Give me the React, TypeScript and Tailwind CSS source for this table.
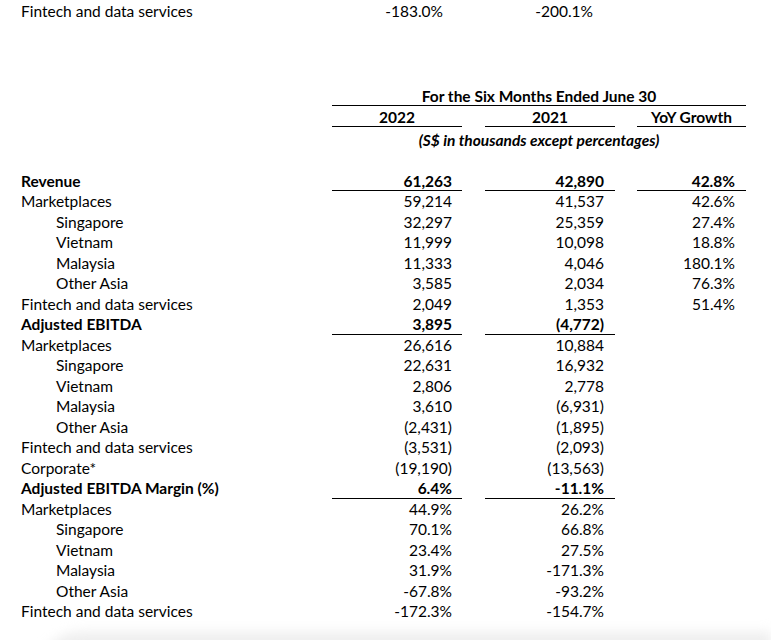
import React from "react";

type Row = {
  label: string;
  indent?: boolean;
  bold?: boolean;
  a: string;
  b: string;
  c?: string;
};

const rows: Row[] = [
  { label: "Revenue", bold: true, a: "61,263", b: "42,890", c: "42.8%" },
  { label: "Marketplaces", a: "59,214", b: "41,537", c: "42.6%" },
  { label: "Singapore", indent: true, a: "32,297", b: "25,359", c: "27.4%" },
  { label: "Vietnam", indent: true, a: "11,999", b: "10,098", c: "18.8%" },
  { label: "Malaysia", indent: true, a: "11,333", b: "4,046", c: "180.1%" },
  { label: "Other Asia", indent: true, a: "3,585", b: "2,034", c: "76.3%" },
  { label: "Fintech and data services", a: "2,049", b: "1,353", c: "51.4%" },
  { label: "Adjusted EBITDA", bold: true, a: "3,895", b: "(4,772)" },
  { label: "Marketplaces", a: "26,616", b: "10,884" },
  { label: "Singapore", indent: true, a: "22,631", b: "16,932" },
  { label: "Vietnam", indent: true, a: "2,806", b: "2,778" },
  { label: "Malaysia", indent: true, a: "3,610", b: "(6,931)" },
  { label: "Other Asia", indent: true, a: "(2,431)", b: "(1,895)" },
  { label: "Fintech and data services", a: "(3,531)", b: "(2,093)" },
  { label: "Corporate*", a: "(19,190)", b: "(13,563)" },
  { label: "Adjusted EBITDA Margin (%)", bold: true, a: "6.4%", b: "-11.1%" },
  { label: "Marketplaces", a: "44.9%", b: "26.2%" },
  { label: "Singapore", indent: true, a: "70.1%", b: "66.8%" },
  { label: "Vietnam", indent: true, a: "23.4%", b: "27.5%" },
  { label: "Malaysia", indent: true, a: "31.9%", b: "-171.3%" },
  { label: "Other Asia", indent: true, a: "-67.8%", b: "-93.2%" },
  { label: "Fintech and data services", a: "-172.3%", b: "-154.7%" },
];

function DataRow({ r }: { r: Row }) {
  const cell = r.bold ? "border-b border-black font-bold" : "";
  return (
    <div className="flex h-[20.5px] leading-[20.5px]">
      <div className={`w-[332px] ${r.indent ? "pl-[56px]" : "pl-[21px]"} ${r.bold ? "font-bold" : ""}`}>
        {r.label}
      </div>
      <div className={`w-[130px] pr-[10px] text-right ${cell}`}>{r.a}</div>
      <div className="w-[23px]" />
      <div className={`w-[130px] pr-[11px] text-right ${cell}`}>{r.b}</div>
      <div className="w-[22px]" />
      <div className={`w-[109px] pr-[11px] text-right ${r.bold && r.c ? cell : ""}`}>{r.c ?? ""}</div>
    </div>
  );
}

export default function App() {
  return (
    <div className="relative h-[640px] w-[771px] overflow-hidden bg-white text-[15.5px] text-black font-['Lato',sans-serif]">
      <div className="mt-[1px] flex h-[20.5px] leading-[20.5px]">
        <div className="w-[332px] pl-[21px]">Fintech and data services</div>
        <div className="w-[111px] text-right">-183.0%</div>
        <div className="w-[150px] text-right">-200.1%</div>
      </div>

      <div className="mt-[64px] ml-[332px] h-[20.5px] w-[414px] border-b border-black text-center font-bold leading-[20.5px]">
        For the Six Months Ended June 30
      </div>
      <div className="flex ml-[332px] h-[21px] pt-[2px] leading-[18.5px] font-bold">
        <div className="w-[130px] border-b border-black text-center">2022</div>
        <div className="w-[23px]" />
        <div className="w-[130px] border-b border-black text-center">2021</div>
        <div className="w-[22px]" />
        <div className="w-[109px] border-b border-black text-center">YoY Growth</div>
      </div>
      <div className="ml-[332px] w-[414px] pt-[4px] text-center font-bold italic leading-[18.5px]">
        (S$ in thousands except percentages)
      </div>

      <div className="mt-[21px] flex flex-col">
        {rows.map((r, i) => (
          <DataRow key={i} r={r} />
        ))}
      </div>

      <div className="mt-[10px] ml-[40px] h-[40px] rounded-tl-[40px] bg-[#eeeeee] blur-[6px]" />
    </div>
  );
}
